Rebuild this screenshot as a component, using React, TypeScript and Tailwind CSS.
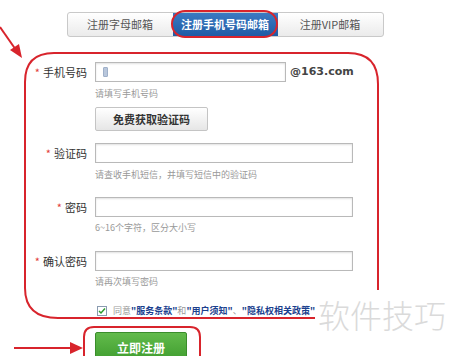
import React from "react";

const tabs = ["注册字母邮箱", "注册手机号码邮箱", "注册VIP邮箱"];

function Label({ text }: { text: string }) {
  return (
    <div className="w-[87px] text-right text-[11px] leading-[20px] text-[#333]">
      <span className="text-[#e23b3b] mr-[3px]">*</span>
      {text}
    </div>
  );
}

function Hint({ text, mt }: { text: string; mt: string }) {
  return (
    <div className={`ml-[95px] text-[9px] leading-[12px] text-[#999] ${mt}`}>
      {text}
    </div>
  );
}

function Input({ wide = true, icon = false }: { wide?: boolean; icon?: boolean }) {
  return (
    <div
      className={`ml-[8px] h-[20px] border border-[#b9b9b9] bg-white shadow-[inset_0_1px_2px_rgba(0,0,0,0.12)] flex items-center ${
        wide ? "w-[258px]" : "w-[191px]"
      }`}
    >
      {icon && (
        <div className="ml-[7px] w-[5px] h-[10px] rounded-[1px] bg-[#b9c7dc] border border-[#9fb0c9]" />
      )}
    </div>
  );
}

export default function App() {
  return (
    <div
      className="relative w-[450px] h-[356px] overflow-hidden bg-white"
      style={{ fontFamily: '"Noto Sans CJK SC", "Noto Sans", sans-serif' }}
    >
      {/* tabs */}
      <div className="pt-[12px] flex justify-center">
        <div className="flex h-[25px] w-[317px] rounded-[3px] border border-[#c9c9c9] bg-gradient-to-b from-white to-[#ebebeb] overflow-hidden">
          {tabs.map((t, i) => (
            <div
              key={t}
              className={`flex-1 flex items-center justify-center text-[11px] ${
                i === 1
                  ? "bg-gradient-to-b from-[#3b7ac2] to-[#1f5ba5] text-white font-bold"
                  : "text-[#555]"
              }`}
            >
              {t}
            </div>
          ))}
        </div>
      </div>

      {/* phone */}
      <div className="mt-[25px] flex items-center">
        <Label text="手机号码" />
        <Input wide={false} icon />
        <span
          className="ml-[4px] text-[11px] font-bold text-[#444]"
          style={{ fontFamily: '"DejaVu Sans", Verdana, sans-serif' }}
        >
          @163.com
        </span>
      </div>
      <Hint text="请填写手机号码" mt="mt-[6px]" />
      <div className="ml-[95px] mt-[7px] w-[113px] h-[24px] border border-[#c4c4c4] rounded-[2px] bg-gradient-to-b from-white to-[#e6e6e6] flex items-center justify-center text-[11px] font-bold text-[#333]">
        免费获取验证码
      </div>

      {/* code */}
      <div className="mt-[12px] flex items-center">
        <Label text="验证码" />
        <Input />
      </div>
      <Hint text="请查收手机短信，并填写短信中的验证码" mt="mt-[6px]" />

      {/* password */}
      <div className="mt-[16px] flex items-center">
        <Label text="密码" />
        <Input />
      </div>
      <Hint text="6~16个字符，区分大小写" mt="mt-[5px]" />

      {/* confirm */}
      <div className="mt-[17px] flex items-center">
        <Label text="确认密码" />
        <Input />
      </div>
      <Hint text="请再次填写密码" mt="mt-[5px]" />

      {/* agree */}
      <div className="mt-[17px] ml-[97px] flex items-center h-[12px]">
        <div className="w-[10px] h-[10px] border border-[#8a9bb0] bg-white flex items-center justify-center">
          <svg width="8" height="8" viewBox="0 0 8 8">
            <path d="M1 4 L3 6 L7 1.5" fill="none" stroke="#2e9b2e" strokeWidth="1.5" />
          </svg>
        </div>
        <span className="ml-[6px] text-[9px] leading-[12px] text-[#999] whitespace-nowrap">
          同意<b className="text-[#1b3f8e]">"服务条款"</b>和
          <b className="text-[#1b3f8e]">"用户须知"</b>、
          <b className="text-[#1b3f8e]">"隐私权相关政策"</b>
        </span>
      </div>

      {/* submit */}
      <div className="mt-[15px] ml-[95px] w-[92px] h-[32px] rounded-[2px] bg-gradient-to-b from-[#62bb4b] to-[#3c9a2c] border border-[#3a8d2b] flex items-center justify-center text-[12px] font-bold text-white">
        立即注册
      </div>

      {/* watermark */}
      <div className="absolute left-[318px] top-[294px] text-[32px] leading-[40px] text-[#dadada] font-light bg-white/70">
        软件技巧
      </div>

      {/* annotations */}
      <svg className="absolute inset-0 pointer-events-none" width="450" height="356">
        <g fill="none" stroke="#d8242c" strokeWidth="2">
          <rect x="172" y="11" width="105" height="26" rx="13" />
          <path d="M315 318 L58 318 Q25 318 25 288 L25 82 Q25 53 54 53 L348 53 Q378 53 378 84 L378 290" />
          <path d="M84 356 L84 337 Q84 327 94 327 L190 327 Q200 327 200 337 L200 356" />
          <line x1="0" y1="27" x2="16" y2="50" />
          <line x1="14" y1="348" x2="72" y2="348" />
        </g>
        <g fill="#d8242c">
          <polygon points="22,58 10,50 19,44" />
          <polygon points="83,348 70,342 70,354" />
        </g>
      </svg>
    </div>
  );
}
